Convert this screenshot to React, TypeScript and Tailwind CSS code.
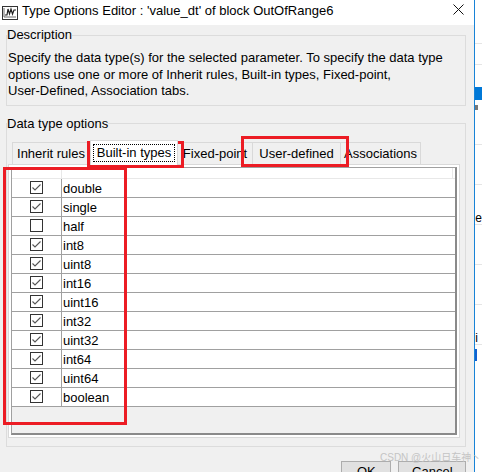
import React from "react";

type DataType = {
  name: string;
  checked: boolean;
};

const dataTypes: DataType[] = [
  { name: "double", checked: true },
  { name: "single", checked: true },
  { name: "half", checked: false },
  { name: "int8", checked: true },
  { name: "uint8", checked: true },
  { name: "int16", checked: true },
  { name: "uint16", checked: true },
  { name: "int32", checked: true },
  { name: "uint32", checked: true },
  { name: "int64", checked: true },
  { name: "uint64", checked: true },
  { name: "boolean", checked: true },
];

const tabs = [
  { label: "Inherit rules", width: "w-[78px]", selected: false },
  { label: "Built-in types", width: "w-[88px]", selected: true },
  { label: "Fixed-point", width: "w-[75px]", selected: false },
  { label: "User-defined", width: "w-[88px]", selected: false },
  { label: "Associations", width: "w-[80px]", selected: false },
];

function WindowIcon() {
  return (
    <svg width="16" height="14" viewBox="0 0 16 14" className="shrink-0">
      <rect x="0.5" y="0.5" width="15" height="13" fill="#fff" stroke="#333" />
      <line x1="2" y1="11" x2="14" y2="11" stroke="#666" />
      <line x1="2" y1="2" x2="2" y2="11" stroke="#666" />
      <polyline
        points="3,9 5,9 6,3 7.5,8 9,3 10.5,8 12,4 14,4"
        fill="none"
        stroke="#222"
        strokeWidth="1.2"
      />
    </svg>
  );
}

function CheckBox({ checked }: { checked: boolean }) {
  return (
    <svg width="13" height="13" viewBox="0 0 13 13">
      <rect x="0.5" y="0.5" width="12" height="12" fill="#fff" stroke="#333" />
      {checked && (
        <polyline
          points="2.5,6.5 5,9 10.5,3.5"
          fill="none"
          stroke="#555"
          strokeWidth="1.1"
        />
      )}
    </svg>
  );
}

function TypeTable() {
  return (
    <div className="ml-[2px] mt-[2px] w-[446px] h-[268px] flex flex-col border-t border-l border-r-2 border-b-2 border-t-[#a0a0a0] border-l-[#a0a0a0] border-r-[#8a8a8a] border-b-[#8a8a8a] bg-[#f0f0f0]">
      <div className="flex h-[11px] shrink-0 bg-white border-b border-[#e8e8e8]">
        <div className="w-[50px] border-r border-[#e8e8e8]" />
        <div className="flex-1 border-r border-[#e8e8e8] mr-[2px]" />
      </div>
      {dataTypes.map((t) => (
        <div
          key={t.name}
          className="flex h-[19px] shrink-0 bg-white border-b border-[#a0a0a0]"
        >
          <div className="w-[50px] flex items-center justify-center border-r border-[#a0a0a0]">
            <CheckBox checked={t.checked} />
          </div>
          <div className="flex-1 flex items-center pl-[1px] pt-[2px] text-[13px] leading-none text-black">
            {t.name}
          </div>
        </div>
      ))}
    </div>
  );
}

export default function App() {
  return (
    <div
      className="relative w-[482px] h-[472px] overflow-hidden flex bg-white text-black"
      style={{ fontFamily: '"Liberation Sans", Arial, sans-serif' }}
    >
      <div className="w-[476px] h-full flex flex-col">
        <div className="h-[25px] shrink-0 bg-white flex items-center pl-[2px]">
          <WindowIcon />
          <span className="ml-[4px] text-[13px] leading-none -mt-[4px]">
            Type Options Editor : 'value_dt' of block OutOfRange6
          </span>
          <svg
            width="11"
            height="11"
            viewBox="0 0 11 11"
            className="ml-auto mr-[10px] -mt-[6px]"
          >
            <path d="M0.5 0.5 L10.5 10.5 M10.5 0.5 L0.5 10.5" stroke="#111" strokeWidth="1" />
          </svg>
        </div>

        <div className="flex-1 bg-[#f0f0f0] pl-[6px] pr-[8px] flex flex-col">
          <fieldset className="mt-[2px] border border-[#dcdcdc] p-0 m-0">
            <legend className="ml-0 px-0 text-[13px] leading-[16px]">Description</legend>
            <div className="pl-[1px] pt-[7px] pb-[5px] text-[13px] leading-[16.5px] whitespace-nowrap">
              Specify the data type(s) for the selected parameter. To specify the data type
              <br />
              options use one or more of Inherit rules, Built-in types, Fixed-point,
              <br />
              User-Defined, Association tabs.
            </div>
          </fieldset>

          <fieldset className="mt-[10px] border border-[#dcdcdc] p-0 m-0">
            <legend className="ml-0 px-0 text-[13px] leading-[16px]">Data type options</legend>
            <div className="pt-[8px] pb-[8px] flex flex-col">
              <div className="flex items-end h-[24px] pl-[5px]">
                {tabs.map((tab, i) =>
                  tab.selected ? (
                    <div
                      key={tab.label}
                      className={`${tab.width} relative z-10 h-[25px] -mb-px bg-white border-l border-t border-r border-[#d9d9d9] flex items-center justify-center`}
                    >
                      <span className="border border-dotted border-black px-[3px] text-[13px] leading-[16px]">
                        {tab.label}
                      </span>
                    </div>
                  ) : (
                    <div
                      key={tab.label}
                      className={`${tab.width} h-[22px] bg-[#f0f0f0] border-t border-r border-[#d9d9d9] ${i === 0 ? "border-l" : ""} flex items-center justify-center text-[13px] leading-none whitespace-nowrap`}
                    >
                      {tab.label}
                    </div>
                  )
                )}
              </div>
              <div className="ml-[1px] w-[452px] h-[274px] border border-[#d9d9d9] bg-white">
                <TypeTable />
              </div>
            </div>
          </fieldset>

          <div className="mt-[14px] flex justify-end gap-[7px]">
            <button className="w-[50px] h-[23px] bg-[#e1e1e1] border border-[#adadad] text-[13px]">
              OK
            </button>
            <button className="w-[68px] h-[23px] bg-[#e1e1e1] border border-[#adadad] text-[13px]">
              Cancel
            </button>
          </div>
        </div>
      </div>

      <div className="w-px h-full bg-[#1883d7]" />
      <div className="flex-1 h-full bg-white flex flex-col">
        <div className="h-[44px] border-b border-[#e5e5e5]" />
        <div className="h-[21px] border-b border-[#e5e5e5]" />
        <div className="h-[22px]" />
        <div className="h-[13px] bg-[#0078d7]" />
        <div className="h-[14px] flex items-center">
          <div className="w-[3px] h-[5px] bg-[#777]" />
        </div>
        <div className="h-[31px] border-b border-[#e5e5e5]" />
        <div className="h-[40px] border-b border-[#e5e5e5]" />
        <div className="h-[40px] border-b border-[#e5e5e5] flex items-end text-[12px] leading-none">e</div>
        <div className="h-[40px] border-b border-[#e5e5e5]" />
        <div className="h-[40px] border-b border-[#e5e5e5]" />
        <div className="h-[40px] border-b border-[#e5e5e5] flex items-end text-[12px] leading-none">i</div>
        <div className="h-[20px] flex items-center">
          <div className="w-[2px] h-[12px] bg-[#1060d0]" />
        </div>
        <div className="flex-1" />
      </div>

      <div className="absolute left-[87px] top-[141px] w-[97px] h-[27px] border-[3px] border-[#ec1c24]" />
      <div className="absolute left-[241px] top-[136px] w-[108px] h-[31px] border-[3px] border-[#ec1c24]" />
      <div className="absolute left-[3px] top-[167px] w-[124px] h-[258px] border-[3px] border-[#ec1c24]" />

      <div
        className="absolute left-[380px] top-[452px] text-[10px] leading-[12px] text-[#c4c4c4] whitespace-nowrap"
        style={{ fontFamily: '"Liberation Sans", "Noto Sans CJK SC", sans-serif' }}
      >
        CSDN @火山日车神丶
      </div>
    </div>
  );
}
